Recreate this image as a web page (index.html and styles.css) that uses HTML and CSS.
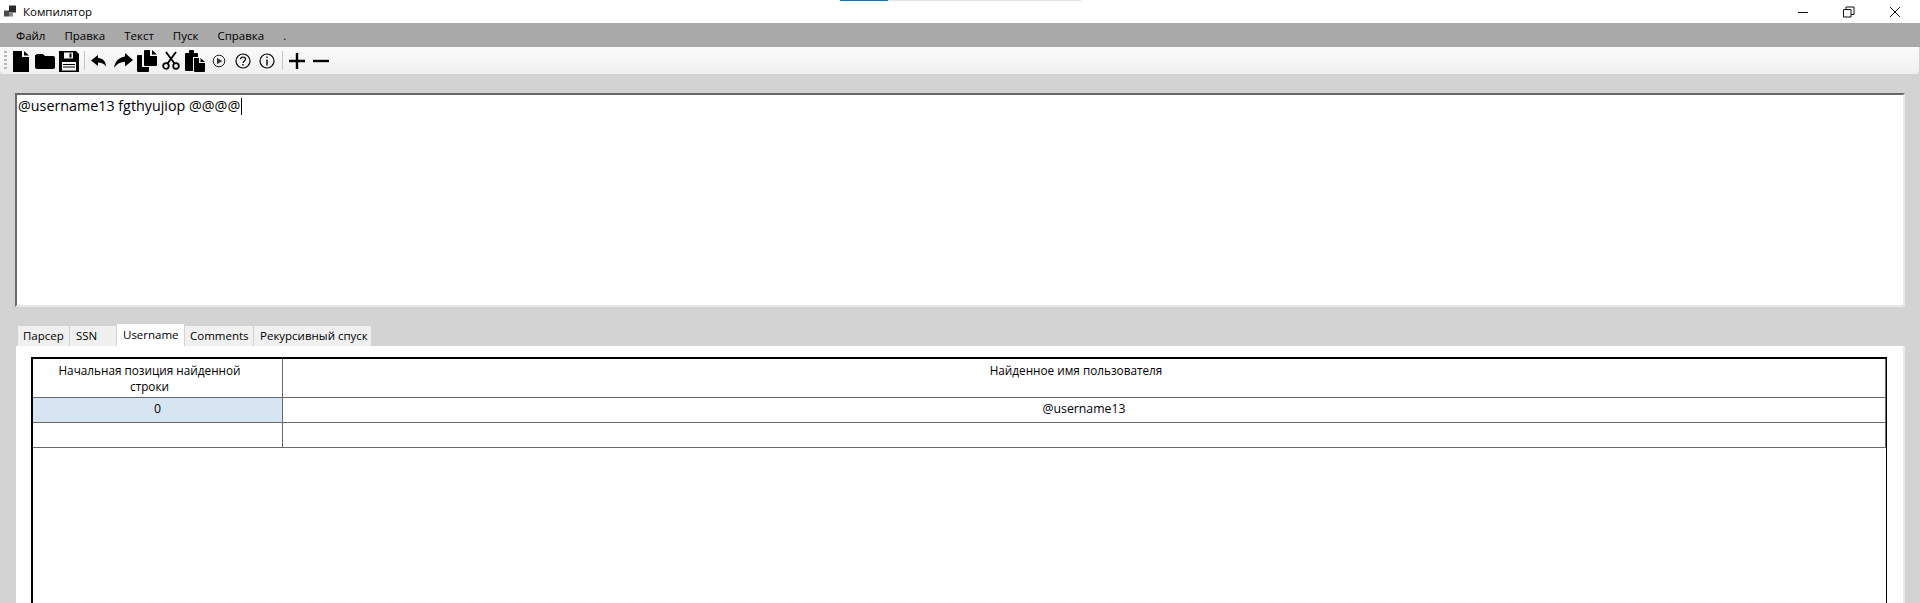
FILE: index.html
```html
<!DOCTYPE html>
<html lang="ru">
<head>
    <meta charset="UTF-8">
    <title>Компилятор</title>
    <link rel="stylesheet" href="styles.css">
</head>
<body>
    <div class="progress"><div class="progress-fill"></div></div>

    <header class="titlebar">
        <svg class="app-icon" width="16" height="16" viewBox="0 0 16 16">
            <rect x="1" y="6.500" width="5" height="6" fill="#4a4a4a"/>
            <rect x="6" y="1.500" width="7" height="7" fill="#2b2b2b"/>
            <rect x="6" y="8.500" width="4" height="4" fill="#8a8a8a"/>
        </svg>
        <span class="title">Компилятор</span>
        <div class="window-buttons">
            <svg width="12" height="12" viewBox="0 0 12 12"><path d="M1 6.500h10" stroke="#111" fill="none"/></svg>
            <svg width="12" height="12" viewBox="0 0 12 12"><path d="M.5 3.500h7.500v7.500H.5zM3 3.500V1h8v7.500H8" stroke="#111" fill="none"/></svg>
            <svg width="12" height="12" viewBox="0 0 12 12"><path d="M1 1l10 10M11 1L1 11" stroke="#111" fill="none"/></svg>
        </div>
    </header>

    <nav class="menu">
        <span>Файл</span>
        <span>Правка</span>
        <span>Текст</span>
        <span>Пуск</span>
        <span>Справка</span>
        <span>.</span>
    </nav>

    <div class="toolbar">
        <div class="grip"></div>
        <!-- new -->
        <div class="tool"><svg width="16" height="22" viewBox="0 0 16 22"><path d="M0 1h9v6h7v15H0zM11 1l5 4.500h-5z"/></svg></div>
        <!-- open -->
        <div class="tool"><svg width="20" height="16" viewBox="0 0 20 16"><path d="M1 2q0-1 1-1h6l2 2h8q2 0 2 2v9q0 2-2 2H2q-2 0-2-2V2z"/></svg></div>
        <!-- save -->
        <div class="tool"><svg width="20" height="22" viewBox="0 0 20 22"><path fill-rule="evenodd" d="M0 1h17l3 3v18H0zM5 2.500v6h9v-6zM3 12v8.500h14V12z"/><path d="M10.500 3.500h2v4h-2zM4 14h12v1H4zM4 16.500h12v1H4z"/></svg></div>
        <div class="sep"></div>
        <!-- undo -->
        <div class="tool"><svg width="16" height="14" viewBox="0 0 16 14"><path d="M7 1L0 6.500 7 12V8.500c3.500 0 6 1 8 4 0-5-3-8-8-8.500z"/></svg></div>
        <!-- redo -->
        <div class="tool"><svg width="20" height="17" viewBox="0 0 20 17"><path d="M12 1l8 7-8 6.500V10c-5 0-8 2-11 6 1-7 5-10.500 11-11.500z"/></svg></div>
        <!-- copy -->
        <div class="tool"><svg width="20" height="22" viewBox="0 0 20 22"><path d="M0 6q0-1 1-1h4v12h7v4q0 1-1 1H1q-1 0-1-1z"/><path d="M7 1q0-1 1-1h5v6h7v9q0 1-1 1H8q-1 0-1-1zM15 0l5 4.500h-5z"/></svg></div>
        <!-- cut -->
        <div class="tool"><svg width="18" height="19" viewBox="0 0 18 19"><g fill="none" stroke="#000" stroke-width="1.800"><circle cx="4" cy="15" r="2.800"/><circle cx="14" cy="15" r="2.800"/><path d="M5.500 12.500L14 1M12.500 12.500L4 1"/></g></svg></div>
        <!-- paste -->
        <div class="tool"><svg width="21" height="22" viewBox="0 0 21 22"><path d="M0 4q0-1 1-1h3V1q0-1 1-1h3q1 0 1 1v2h3q1 0 1 1v3H8v14H1q-1 0-1-1z"/><path d="M9 8h5v5h6v8q0 1-1 1h-9q-1 0-1-1zM15.500 8l4.500 4h-4.500z"/></svg></div>
        <!-- run -->
        <div class="tool"><svg width="14" height="14" viewBox="0 0 14 14"><circle cx="7" cy="7" r="5.800" fill="none" stroke="#222"/><path d="M5 3.800L10.200 7 5 10.200z" fill="#333"/></svg></div>
        <!-- help -->
        <div class="tool"><svg width="16" height="16" viewBox="0 0 16 16"><circle cx="8" cy="8" r="7" fill="none" stroke="#000" stroke-width="1.200"/><path d="M5.500 6.300C5.500 4.800 6.600 4 8 4s2.500.8 2.500 2.100c0 1.900-2.500 1.800-2.500 3.900" fill="none" stroke="#000" stroke-width="1.200"/><rect x="7.300" y="11" width="1.400" height="1.500"/></svg></div>
        <!-- info -->
        <div class="tool"><svg width="16" height="16" viewBox="0 0 16 16"><circle cx="8" cy="8" r="7" fill="none" stroke="#000" stroke-width="1.200"/><rect x="7.300" y="3.500" width="1.400" height="1.500"/><rect x="7.300" y="6.500" width="1.400" height="6"/></svg></div>
        <div class="sep"></div>
        <!-- zoom in -->
        <div class="tool"><svg width="16" height="16" viewBox="0 0 16 16"><path d="M6.800 0h2.400v6.800H16v2.400H9.200V16H6.800V9.200H0V6.800h6.800z"/></svg></div>
        <!-- zoom out -->
        <div class="tool"><svg width="16" height="16" viewBox="0 0 16 16"><path d="M0 6.800h16v2.400H0z"/></svg></div>
    </div>

    <main class="content">
        <div class="editor">@username13 fgthyujiop @@@@<span class="caret"></span></div>

        <div class="tabs">
            <div class="tab tab-parser">Парсер</div>
            <div class="tab tab-ssn">SSN</div>
            <div class="tab tab-active">Username</div>
            <div class="tab tab-comments">Comments</div>
            <div class="tab tab-rec">Рекурсивный спуск</div>
        </div>

        <section class="panel">
            <div class="grid">
                <div class="row row-head">
                    <div class="cell cell-first">Начальная позиция найденной<br>строки</div>
                    <div class="cell">Найденное имя пользователя</div>
                </div>
                <div class="row">
                    <div class="cell cell-first cell-selected">0</div>
                    <div class="cell">@username13</div>
                </div>
                <div class="row">
                    <div class="cell cell-first"></div>
                    <div class="cell"></div>
                </div>
            </div>
        </section>
    </main>
</body>
</html>
```

FILE: styles.css
```css
* {
    margin: 0;
    padding: 0;
    box-sizing: border-box;
}
html, body {
    height: 603px;
    overflow: hidden;
}
body {
    position: relative;
    display: flex;
    flex-direction: column;
    font-family: "Open Sans", "Noto Sans", sans-serif;
    font-size: 11.5px;
    color: #000;
    background-color: #d3d3d3;
}

.progress {
    position: absolute;
    top: 0;
    left: 840px;
    width: 241px;
    height: 1px;
    background-color: #e4e4e4;
}
.progress-fill {
    width: 48px;
    height: 1px;
    background-color: #0078d7;
}

.titlebar {
    display: flex;
    align-items: center;
    height: 23px;
    background-color: #fff;
    padding-left: 3px;
}
.title {
    margin-left: 4px;
    font-size: 11.5px;
}
.window-buttons {
    display: flex;
    margin-left: auto;
    margin-right: 19px;
    gap: 34px;
}

.menu {
    display: flex;
    align-items: center;
    height: 24px;
    padding-left: 16px;
    gap: 19px;
    background-color: #a9a9a9;
}

.toolbar {
    display: flex;
    align-items: center;
    height: 27px;
    margin-right: 1px;
    padding-left: 4px;
    background: linear-gradient(#fbfbfb, #f0f0f0);
    border-radius: 0 0 3px 3px;
}
.grip {
    width: 3px;
    height: 19px;
    margin-right: 2px;
    background: repeating-linear-gradient(#b8b8b8 0 2px, transparent 2px 4px);
}
.tool {
    display: flex;
    align-items: center;
    justify-content: center;
    width: 24px;
    height: 24px;
}
.sep {
    width: 6px;
    height: 19px;
    background: linear-gradient(#c4c4c4, #c4c4c4) center / 1px 100% no-repeat;
}

.content {
    flex: 1;
    display: flex;
    flex-direction: column;
    padding: 19px 15px 0 15px;
    min-height: 0;
}
.editor {
    height: 214px;
    padding: 1px;
    font-size: 14.300px;
    line-height: 20px;
    background-color: #fff;
    border-style: solid;
    border-width: 2px;
    border-color: #696969 #e8e8e8 #e8e8e8 #696969;
}
.caret {
    display: inline-block;
    width: 1px;
    height: 17px;
    margin-left: 1px;
    vertical-align: -4px;
    background-color: #000;
}

.tabs {
    display: flex;
    align-items: flex-end;
    height: 22px;
    margin-top: 17px;
    padding-left: 3px;
}
.tab {
    display: flex;
    align-items: center;
    height: 20px;
    padding-left: 5px;
    margin-right: 1px;
    background-color: #f0f0f0;
    border-bottom: 1px solid #f0f0f0;
    font-size: 11.5px;
}
.tab-parser { width: 51px; }
.tab-ssn { width: 46px; padding-left: 6px; }
.tab-comments { width: 68px; }
.tab-rec { width: 117px; margin-right: 0; padding-left: 6px; }
.tab-active {
    width: 67px;
    height: 22px;
    padding-left: 6px;
    padding-bottom: 2px;
    background-color: #fff;
    border-bottom: none;
}

.panel {
    flex: 1;
    min-height: 0;
    margin-left: 1px;
    padding: 11px 16px 0 15px;
    background-color: #fff;
    border-right: 2px solid #e8e8e8;
}
.grid {
    height: 100%;
    border-style: solid;
    border-color: #000;
    border-width: 2px 1px 0 2px;
}
.row {
    display: flex;
    height: 25px;
    border-bottom: 1px solid #696969;
    border-right: 1px solid #696969;
    font-size: 12.300px;
}
.row-head {
    height: 39px;
    font-size: 11.750px;
}
.cell {
    flex: 1;
    display: flex;
    align-items: center;
    justify-content: center;
    text-align: center;
    line-height: 16px;
    padding-bottom: 2px;
}
.row-head .cell {
    align-items: flex-start;
    padding: 3px 16px 0 0;
}
.cell-first {
    flex: 0 0 250px;
    border-right: 1px solid #696969;
}
.cell-selected {
    background-color: #d7e4f2;
}
```
